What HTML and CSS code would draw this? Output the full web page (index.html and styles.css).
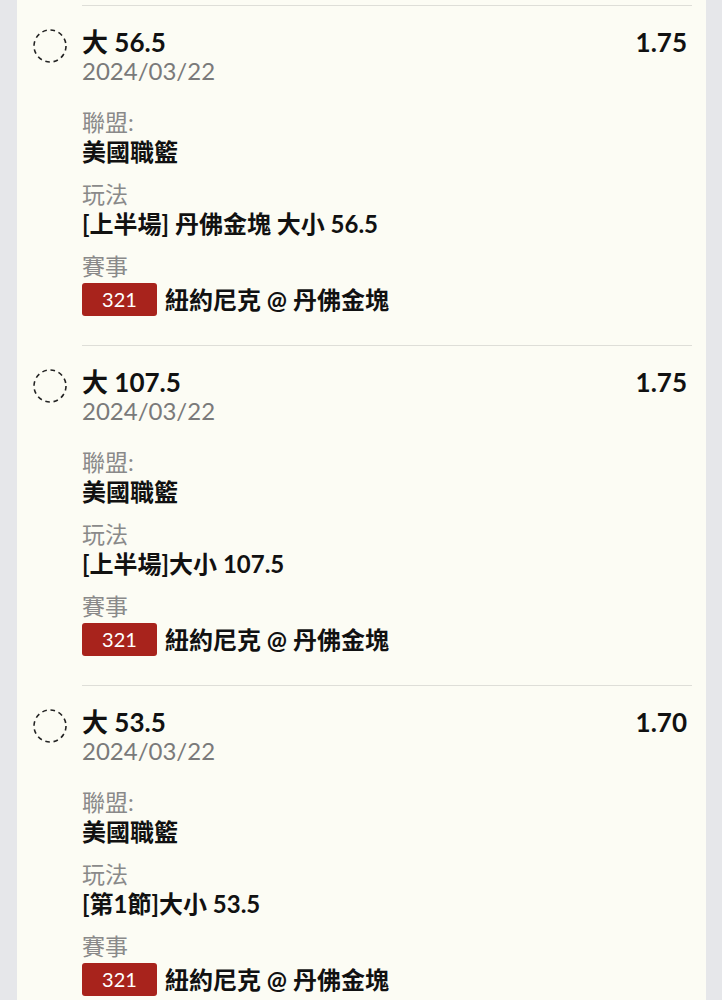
FILE: index.html
```html
<!DOCTYPE html>
<html lang="zh-Hant">
<head>
    <meta charset="UTF-8">
    <meta name="viewport" content="width=device-width, initial-scale=1.0">
    <title>注單</title>
    <link rel="stylesheet" href="styles.css">
</head>
<body>
    <div class="sheet">
        <div class="bet-item">
            <svg class="check" width="34" height="34" viewBox="0 0 34 34"><circle cx="17" cy="17" r="16" /></svg>
            <div class="bet">
                <div class="bet-head">
                    <span class="bet-title">大 56.5</span>
                    <span class="bet-odds">1.75</span>
                </div>
                <div class="bet-date">2024/03/22</div>
                <div class="field">
                    <div class="field-label">聯盟:</div>
                    <div class="field-value">美國職籃</div>
                </div>
                <div class="field">
                    <div class="field-label">玩法</div>
                    <div class="field-value">[上半場] 丹佛金塊 大小 56.5</div>
                </div>
                <div class="field">
                    <div class="field-label">賽事</div>
                    <div class="match"><span class="match-no">321</span>紐約尼克 @ 丹佛金塊</div>
                </div>
            </div>
        </div>

        <div class="bet-item">
            <svg class="check" width="34" height="34" viewBox="0 0 34 34"><circle cx="17" cy="17" r="16" /></svg>
            <div class="bet">
                <div class="bet-head">
                    <span class="bet-title">大 107.5</span>
                    <span class="bet-odds">1.75</span>
                </div>
                <div class="bet-date">2024/03/22</div>
                <div class="field">
                    <div class="field-label">聯盟:</div>
                    <div class="field-value">美國職籃</div>
                </div>
                <div class="field">
                    <div class="field-label">玩法</div>
                    <div class="field-value">[上半場]大小 107.5</div>
                </div>
                <div class="field">
                    <div class="field-label">賽事</div>
                    <div class="match"><span class="match-no">321</span>紐約尼克 @ 丹佛金塊</div>
                </div>
            </div>
        </div>

        <div class="bet-item">
            <svg class="check" width="34" height="34" viewBox="0 0 34 34"><circle cx="17" cy="17" r="16" /></svg>
            <div class="bet">
                <div class="bet-head">
                    <span class="bet-title">大 53.5</span>
                    <span class="bet-odds">1.70</span>
                </div>
                <div class="bet-date">2024/03/22</div>
                <div class="field">
                    <div class="field-label">聯盟:</div>
                    <div class="field-value">美國職籃</div>
                </div>
                <div class="field">
                    <div class="field-label">玩法</div>
                    <div class="field-value">[第1節]大小 53.5</div>
                </div>
                <div class="field">
                    <div class="field-label">賽事</div>
                    <div class="match"><span class="match-no">321</span>紐約尼克 @ 丹佛金塊</div>
                </div>
            </div>
        </div>
    </div>
</body>
</html>
```

FILE: styles.css
```css
body {
    margin: 0;
    padding: 0;
    font-family: "Lato", "Noto Sans CJK TC", sans-serif;
    background: #e6e7ea;
    color: #111;
}

.sheet {
    margin: 0 16px 0 17px;
    padding-top: 5px;
    background: #fcfcf4;
    min-height: 1000px;
}

.bet-item {
    display: flex;
    align-items: flex-start;
}

.check {
    flex: none;
    margin: 24px 15px 0 16px;
}

.check circle {
    fill: none;
    stroke: #222;
    stroke-width: 1.6;
    stroke-dasharray: 4.6 3.78;
}

.bet {
    flex: 1;
    margin-right: 14px;
    padding: 21px 5px 29px 0;
    border-top: 1px solid #deded8;
}

.bet-head {
    display: flex;
    justify-content: space-between;
    line-height: 30px;
    font-size: 26px;
    font-weight: 700;
}

.bet-date {
    font-size: 24px;
    line-height: 27px;
    color: #7a7a7a;
    margin-bottom: 24px;
}

.field {
    margin-bottom: 14px;
}

.field:last-child {
    margin-bottom: 0;
}

.field-label {
    font-size: 23px;
    line-height: 29px;
    color: #8a8a8a;
}

.field-value {
    font-size: 24px;
    line-height: 29px;
    font-weight: 700;
}

.match {
    display: flex;
    align-items: center;
    margin-top: 2px;
    font-size: 24px;
    line-height: 33px;
    font-weight: 700;
}

.match-no {
    display: inline-flex;
    align-items: center;
    justify-content: center;
    width: 75px;
    height: 33px;
    margin-right: 8px;
    background: #a8231c;
    border-radius: 3px;
    color: #fff;
    font-size: 20px;
    font-weight: 400;
}
```
